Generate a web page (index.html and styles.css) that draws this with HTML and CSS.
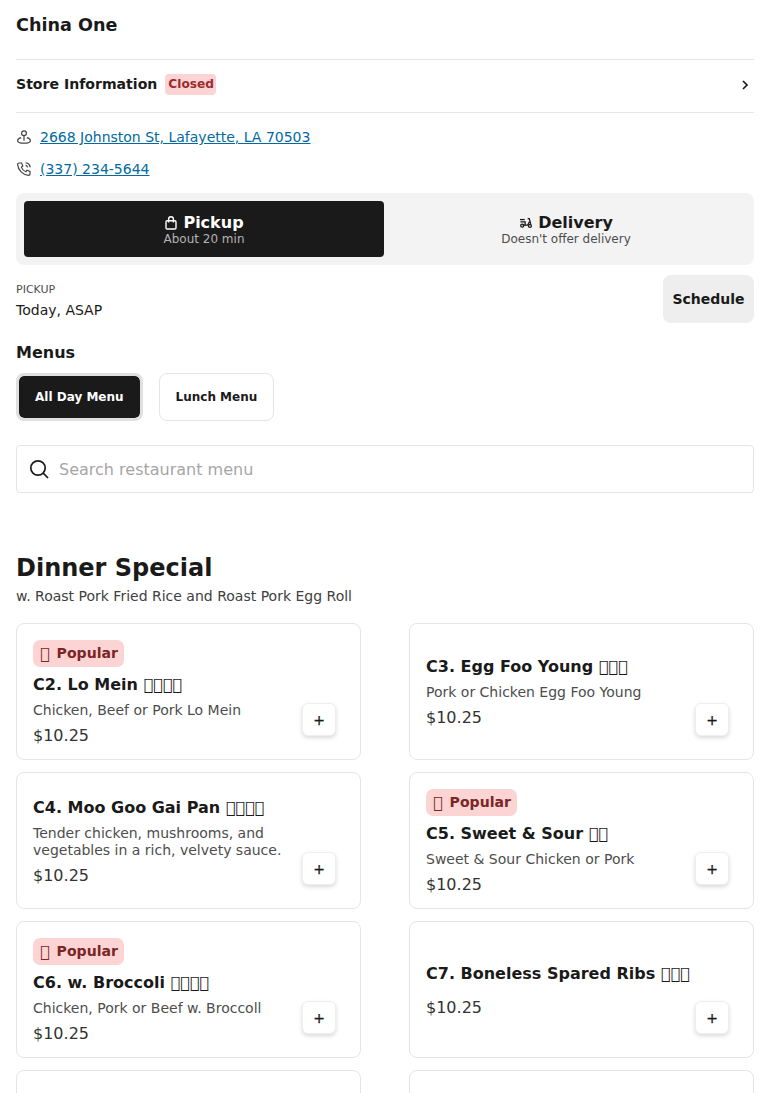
FILE: index.html
```html
<!DOCTYPE html>
<html lang="en">
<head>
<meta charset="utf-8">
<title>China One</title>
<link rel="stylesheet" href="styles.css">
</head>
<body>
<main class="page">
  <h1 class="store-name">China One</h1>
  <div class="store-row">
    <div class="store-row-left"><span class="store-label">Store Information</span><span class="closed">Closed</span></div>
    <svg class="chev" viewBox="0 0 12 12" width="12" height="12"><path d="M4 2l4 4-4 4" fill="none" stroke="#1a1a1a" stroke-width="1.7"/></svg>
  </div>
  <div class="contact">
    <svg class="contact-icon" viewBox="0 0 16 16" width="16" height="16" fill="none" stroke="#444" stroke-width="1.2"><circle cx="8" cy="4.2" r="2.4"/><path d="M8 6.6v5.2"/><path d="M5.2 8.6C3 9.2 1.6 10.2 1.6 11.4c0 1.6 2.9 2.8 6.4 2.8s6.4-1.2 6.4-2.8c0-1.2-1.4-2.2-3.6-2.8"/></svg>
    <a class="contact-link" href="#">2668 Johnston St, Lafayette, LA 70503</a>
  </div>
  <div class="contact contact-phone">
    <svg class="contact-icon" viewBox="0 0 16 16" width="16" height="16" fill="none" stroke="#444" stroke-width="1.2"><path d="M3 2h2.6l1.2 3-1.5 1.1a8 8 0 0 0 4.6 4.6L11 9.2l3 1.2V13a1.4 1.4 0 0 1-1.4 1.4C7 14 2 9 1.6 3.4A1.4 1.4 0 0 1 3 2z"/><path d="M9.6 4.4a2.4 2.4 0 0 1 2 2"/><path d="M9.6 1.8a5 5 0 0 1 4.6 4.6"/></svg>
    <a class="contact-link" href="#">(337) 234-5644</a>
  </div>
  <div class="mode-toggle">
    <div class="mode mode-active">
      <div class="mode-title"><svg viewBox="0 0 14 14" width="14" height="14" fill="none" stroke="currentColor" stroke-width="1.4"><rect x="2" y="4.7" width="10" height="8.3" rx="1.2"/><path d="M4.6 6.4V3.2a2.4 2.4 0 0 1 4.8 0v3.2"/></svg>Pickup</div>
      <div class="mode-sub">About 20 min</div>
    </div>
    <div class="mode">
      <div class="mode-title"><svg viewBox="0 0 16 14" width="14" height="12" fill="none" stroke="currentColor" stroke-width="1.5"><path d="M1 3h5.5"/><path d="M1.5 5.6h5.5v3.9H4"/><circle cx="3.6" cy="10" r="1.8"/><circle cx="12.6" cy="10.4" r="1.7"/><path d="M10 1.8h1.8L13.5 8M7 9.5h3l2-4"/></svg>Delivery</div>
      <div class="mode-sub">Doesn't offer delivery</div>
    </div>
  </div>
  <div class="schedule-row">
    <div class="schedule-info">
      <div class="schedule-label">PICKUP</div>
      <div class="schedule-time">Today, ASAP</div>
    </div>
    <button class="schedule-btn">Schedule</button>
  </div>
  <h2 class="menus-title">Menus</h2>
  <div class="menu-tabs">
    <button class="tab tab-active">All Day Menu</button>
    <button class="tab">Lunch Menu</button>
  </div>
  <div class="search">
    <svg viewBox="0 0 20 20" width="20" height="20" fill="none" stroke="#1a1a1a" stroke-width="1.7"><circle cx="9" cy="9" r="7.2"/><path d="M14.2 14.2L19 19"/></svg>
    <span class="search-text">Search restaurant menu</span>
  </div>
  <h2 class="section-title">Dinner Special</h2>
  <p class="section-sub">w. Roast Pork Fried Rice and Roast Pork Egg Roll</p>
  <div class="grid">
    <article class="card">
      <div class="badge"><span class="badge-icon">&#xE000;</span>Popular</div>
      <h3 class="item-name">C2. Lo Mein <span class="tofu">&#xE000;&#xE000;&#xE000;&#xE000;</span></h3>
      <p class="item-desc">Chicken, Beef or Pork Lo Mein</p>
      <div class="item-price">$10.25</div>
      <button class="add">+</button>
    </article>
    <article class="card">
      <h3 class="item-name">C3. Egg Foo Young <span class="tofu">&#xE000;&#xE000;&#xE000;</span></h3>
      <p class="item-desc">Pork or Chicken Egg Foo Young</p>
      <div class="item-price">$10.25</div>
      <button class="add">+</button>
    </article>
    <article class="card">
      <h3 class="item-name">C4. Moo Goo Gai Pan <span class="tofu">&#xE000;&#xE000;&#xE000;&#xE000;</span></h3>
      <p class="item-desc">Tender chicken, mushrooms, and vegetables in a rich, velvety sauce.</p>
      <div class="item-price">$10.25</div>
      <button class="add">+</button>
    </article>
    <article class="card">
      <div class="badge"><span class="badge-icon">&#xE000;</span>Popular</div>
      <h3 class="item-name">C5. Sweet &amp; Sour <span class="tofu">&#xE000;&#xE000;</span></h3>
      <p class="item-desc">Sweet &amp; Sour Chicken or Pork</p>
      <div class="item-price">$10.25</div>
      <button class="add">+</button>
    </article>
    <article class="card">
      <div class="badge"><span class="badge-icon">&#xE000;</span>Popular</div>
      <h3 class="item-name">C6. w. Broccoli <span class="tofu">&#xE000;&#xE000;&#xE000;&#xE000;</span></h3>
      <p class="item-desc">Chicken, Pork or Beef w. Broccoll</p>
      <div class="item-price">$10.25</div>
      <button class="add">+</button>
    </article>
    <article class="card">
      <h3 class="item-name item-name-solo">C7. Boneless Spared Ribs <span class="tofu">&#xE000;&#xE000;&#xE000;</span></h3>
      <div class="item-price">$10.25</div>
      <button class="add">+</button>
    </article>
    <article class="card"></article>
    <article class="card"></article>
  </div>
</main>
</body>
</html>
```
FILE: styles.css
```css
* { box-sizing: border-box; }
html, body { margin: 0; padding: 0; background: #fff; }
body { font-family: "DejaVu Sans", sans-serif; color: #1a1a1a; }
.page { height: 1093px; overflow: hidden; padding: 0 16px; }
.store-name { margin: 0; padding-top: 14px; height: 59px; font-size: 17.6px; line-height: 22px; font-weight: 700; }
.store-row { height: 54px; border-top: 1px solid #e5e5e5; border-bottom: 1px solid #e5e5e5; display: flex; align-items: center; justify-content: space-between; padding: 0 3px 3px 0; }
.store-row-left { display: flex; align-items: center; gap: 8px; }
.store-label { font-size: 14.08px; font-weight: 700; padding-bottom: 2px; }
.closed { font-size: 12.16px; font-weight: 700; color: #9b2c2c; background: #fcd4d4; border-radius: 4px; padding: 3px 2.5px 3px 3px; line-height: 15px; }
.contact { display: flex; align-items: center; gap: 8px; height: 20px; margin-top: 14px; }
.contact-phone { margin-top: 12px; }
.contact-icon { flex: none; }
.contact-link { font-size: 14px; color: #0369a1; text-decoration: underline; }
.mode-toggle { margin-top: 14px; height: 72px; background: #f3f3f3; border-radius: 8px; padding: 8px; display: grid; grid-template-columns: 360px 360px; gap: 2px; }
.mode { border-radius: 4px; padding-top: 1px; display: flex; flex-direction: column; align-items: center; justify-content: center; }
.mode-active { background: #1a1a1a; color: #fff; }
.mode-title { display: flex; align-items: center; gap: 5px; font-size: 16px; font-weight: 700; line-height: 20px; }
.mode-sub { margin-top: -1px; font-size: 12px; line-height: 14px; color: #4d4d4d; }
.mode-active .mode-sub { color: #b3b3b3; }
.schedule-row { margin-top: 10px; display: flex; justify-content: space-between; align-items: center; }
.schedule-info { padding-top: 2px; }
.schedule-label { font-size: 11px; line-height: 14px; color: #4d4d4d; padding-top: 2px; }
.schedule-time { font-size: 14px; line-height: 18px; margin-top: 4px; }
.schedule-btn { width: 91px; height: 48px; border: 0; border-radius: 8px; background: #eee; color: #1a1a1a; font: 700 14px "DejaVu Sans", sans-serif; padding: 0; }
.menus-title { margin: 20px 0 0; font-size: 16px; line-height: 20px; font-weight: 700; }
.menu-tabs { display: flex; gap: 16px; margin-top: 10px; }
.tab { height: 48px; padding: 0 16px; border: 1px solid #e5e5e5; border-radius: 8px; background: #fff; color: #1a1a1a; font: 700 12px "DejaVu Sans", sans-serif; }
.tab-active { background: #1a1a1a; color: #fff; border: 3px solid #e0e0e0; background-clip: padding-box; }
.search { margin-top: 24px; height: 48px; border: 1px solid #e5e5e5; border-radius: 4px; display: flex; align-items: center; gap: 10px; padding: 0 12px; }
.search-text { font-size: 16px; color: #a6a6a6; }
.section-title { margin: 59px 0 0; font-size: 24px; line-height: 32px; font-weight: 700; }
.section-sub { margin: 2px 0 0; font-size: 14px; line-height: 20px; color: #404040; }
.grid { margin-top: 17px; display: grid; grid-template-columns: 345px 345px; column-gap: 48px; row-gap: 12px; }
.card { position: relative; height: 137px; border: 1px solid #e5e5e5; border-radius: 8px; padding: 2px 16px 0; display: flex; flex-direction: column; justify-content: center; align-items: flex-start; }
.badge { flex: none; display: flex; align-items: center; gap: 7px; height: 27px; padding: 0 6px 2px 7px; background: #fcd4d4; border-radius: 7px; color: #7b2525; font-size: 14.08px; font-weight: 700; margin: 1px 0 8px; }
.badge-icon { font-weight: 400; font-size: 16px; line-height: 16px; padding-top: 2px; }
.item-name { flex: none; margin: 0; font-size: 16px; line-height: 20px; font-weight: 700; }
.item-name-solo { margin-bottom: 14px; }
.tofu { font-weight: 400; }
.item-desc { flex: none; margin: 7px 0; font-size: 14px; line-height: 17px; color: #4d4d4d; max-width: 265px; }
.item-price { flex: none; font-size: 16px; line-height: 20px; color: #333; }
.add { position: absolute; right: 24px; bottom: 23px; width: 34px; height: 33px; padding: 0; border: 1px solid #eee; border-radius: 6px; background: #fff; color: #1a1a1a; font: 400 14px "DejaVu Sans", sans-serif; -webkit-text-stroke: 0.3px #1a1a1a; box-shadow: 0 2px 4px rgba(0,0,0,.15); }
```
